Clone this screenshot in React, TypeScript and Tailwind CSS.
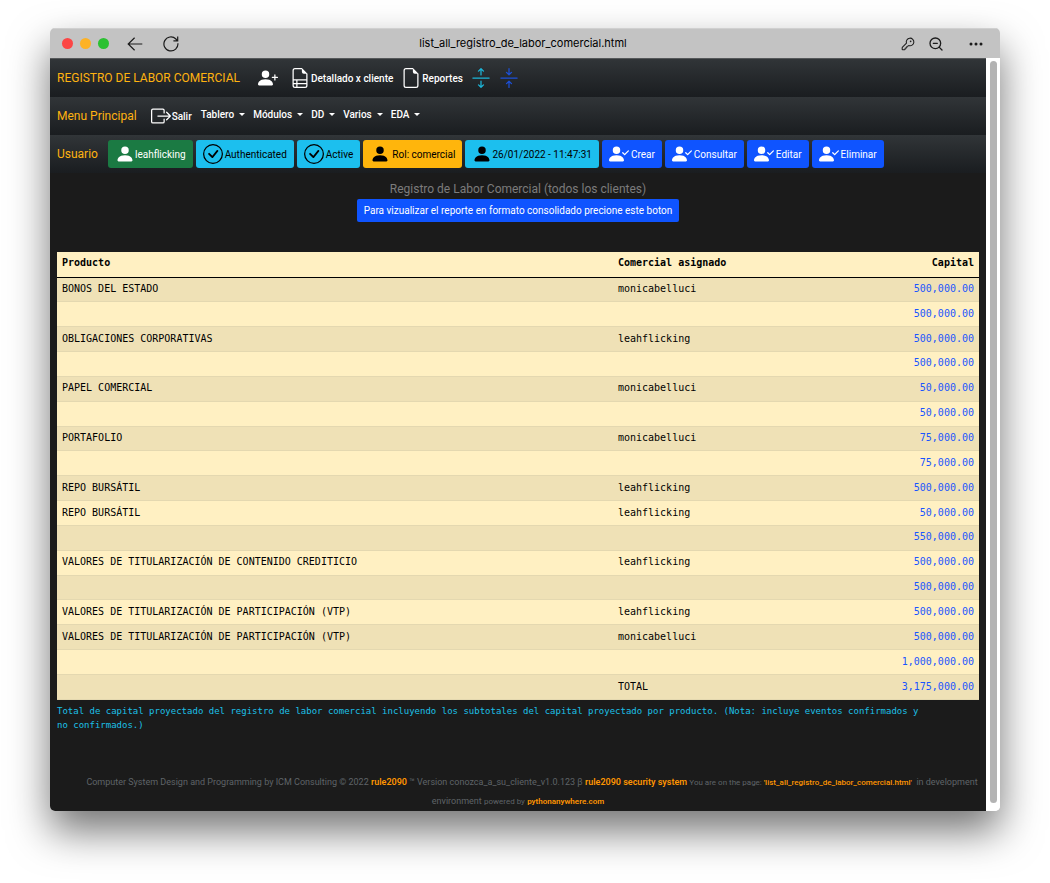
import type { ReactNode } from "react";
import {
  BsArrowsCollapse,
  BsArrowsExpand,
  BsBoxArrowRight,
  BsCheckCircle,
  BsFileEarmark,
  BsFileEarmarkRuled,
  BsPersonCheckFill,
  BsPersonFill,
  BsPersonPlusFill,
  BsThreeDots,
} from "react-icons/bs";
import { KeyRound, ZoomOut } from "lucide-react";

const rows: [string, string, string][] = [
  ["BONOS DEL ESTADO", "monicabelluci", "500,000.00"],
  ["", "", "500,000.00"],
  ["OBLIGACIONES CORPORATIVAS", "leahflicking", "500,000.00"],
  ["", "", "500,000.00"],
  ["PAPEL COMERCIAL", "monicabelluci", "50,000.00"],
  ["", "", "50,000.00"],
  ["PORTAFOLIO", "monicabelluci", "75,000.00"],
  ["", "", "75,000.00"],
  ["REPO BURSÁTIL", "leahflicking", "500,000.00"],
  ["REPO BURSÁTIL", "leahflicking", "50,000.00"],
  ["", "", "550,000.00"],
  ["VALORES DE TITULARIZACIÓN DE CONTENIDO CREDITICIO", "leahflicking", "500,000.00"],
  ["", "", "500,000.00"],
  ["VALORES DE TITULARIZACIÓN DE PARTICIPACIÓN (VTP)", "leahflicking", "500,000.00"],
  ["VALORES DE TITULARIZACIÓN DE PARTICIPACIÓN (VTP)", "monicabelluci", "500,000.00"],
  ["", "", "1,000,000.00"],
  ["", "TOTAL", "3,175,000.00"],
];

const menus = ["Tablero", "Módulos", "DD", "Varios", "EDA"];
const actions = ["Crear", "Consultar", "Editar", "Eliminar"];

function Bar({ label, children }: { label: string; children: ReactNode }) {
  return (
    <nav
      aria-label={label}
      className="flex h-[38px] items-center bg-linear-to-b from-[#313538] to-[#1a1d20] pl-[7px] text-[10px] text-white"
    >
      {children}
    </nav>
  );
}

function Brand({ children }: { children: ReactNode }) {
  return (
    <a href="#" className="text-[12px] whitespace-nowrap text-[#ffb310]">
      {children}
    </a>
  );
}

function Pill({ tone, children }: { tone: string; children: ReactNode }) {
  return (
    <button type="button" className={`flex h-7 items-center rounded-[3px] px-[7px] whitespace-nowrap ${tone}`}>
      {children}
    </button>
  );
}

function TitleBar() {
  return (
    <header className="flex h-[30px] items-center border-t border-[#d0d0d0] bg-[#c3c3c3] pr-4 pl-3 text-[#1c1c1c]">
      <div className="flex flex-1 items-center">
        <div className="flex gap-[7px]">
          <span className="size-[11px] rounded-full bg-[#fc4645]" />
          <span className="size-[11px] rounded-full bg-[#fdb225]" />
          <span className="size-[11px] rounded-full bg-[#2bc132]" />
        </div>
        <button type="button" aria-label="Atrás" className="ml-[18px]">
          <svg width="16" height="16" viewBox="0 0 16 16" fill="none" stroke="currentColor" strokeWidth="1.2">
            <path d="M15.3 8H1.2M7.6 1.8 1.2 8l6.4 6.2" />
          </svg>
        </button>
        <button type="button" aria-label="Recargar" className="ml-5">
          <svg width="16" height="16" viewBox="0 0 16 16" fill="none" stroke="currentColor" strokeWidth="1.2">
            <path d="M14.9 7.2A7 7 0 1 1 12.9 3l1.7 1.8M14.7.6v4.3h-4.3" />
          </svg>
        </button>
      </div>
      <h1 className="text-[11px] text-black">list_all_registro_de_labor_comercial.html</h1>
      <div className="flex flex-1 items-center justify-end">
        <button type="button" aria-label="Contraseñas">
          <KeyRound size={14} strokeWidth={1.8} />
        </button>
        <button type="button" aria-label="Alejar" className="ml-[13px]">
          <ZoomOut size={16} strokeWidth={2} />
        </button>
        <button type="button" aria-label="Más" className="ml-6">
          <BsThreeDots size={16} />
        </button>
      </div>
    </header>
  );
}

export default function App() {
  return (
    <div className="min-h-screen bg-white px-[50px] pt-7 pb-[72px] font-[Inter,sans-serif]">
      <div className="overflow-hidden rounded-[5px] shadow-[0_20px_40px_rgba(0,0,0,0.55)]">
        <TitleBar />
        <div className="flex font-[Roboto,sans-serif]">
          <div className="min-w-0 flex-1 bg-[#1b1b1b]">
            <div className="border-t border-[#55585a]">
              <Bar label="Registro">
                <Brand>REGISTRO DE LABOR COMERCIAL</Brand>
                <a href="#" aria-label="Agregar cliente" className="ml-[18px]">
                  <BsPersonPlusFill size={20} />
                </a>
                <a href="#" className="ml-3 flex items-center gap-px font-medium whitespace-nowrap">
                  <BsFileEarmarkRuled size={20} />
                  Detallado x cliente
                </a>
                <a href="#" className="ml-2 flex items-center gap-px font-medium">
                  <BsFileEarmark size={20} />
                  Reportes
                </a>
                <a href="#" aria-label="Expandir" className="ml-2 text-[#1cb5d8]">
                  <BsArrowsExpand size={20} />
                </a>
                <a href="#" aria-label="Contraer" className="ml-2 text-[#1c50d8]">
                  <BsArrowsCollapse size={20} />
                </a>
              </Bar>
            </div>
            <Bar label="Menu Principal">
              <Brand>Menu Principal</Brand>
              <a href="#" className="ml-[14px] flex items-center gap-px font-medium">
                <BsBoxArrowRight size={20} />
                Salir
              </a>
              <div className="mb-1 ml-[9px] flex gap-2">
                {menus.map((m) => (
                  <button key={m} type="button" className="flex items-center gap-[5px] font-medium">
                    {m}
                    <span className="border-x-[3px] border-t-[3px] border-x-transparent border-t-white" />
                  </button>
                ))}
              </div>
            </Bar>
            <Bar label="Usuario">
              <Brand>Usuario</Brand>
              <div className="ml-[10px] flex gap-[3px]">
                <Pill tone="bg-[#1b7a43] text-white">
                  <BsPersonFill size={20} />
                  leahflicking
                </Pill>
                <Pill tone="bg-[#1cbfee] text-black">
                  <BsCheckCircle size={20} className="mr-[2px]" />
                  Authenticated
                </Pill>
                <Pill tone="bg-[#1cbfee] text-black">
                  <BsCheckCircle size={20} className="mr-[2px]" />
                  Active
                </Pill>
                <Pill tone="bg-[#ffb50c] text-black">
                  <BsPersonFill size={20} className="mr-[2px]" />
                  Rol: comercial
                </Pill>
                <Pill tone="bg-[#1cbfee] text-black">
                  <BsPersonFill size={20} />
                  26/01/2022 - 11:47:31
                </Pill>
                {actions.map((a) => (
                  <Pill key={a} tone="bg-[#0f54ff] text-white">
                    <BsPersonCheckFill size={20} className="mr-[2px]" />
                    {a}
                  </Pill>
                ))}
              </div>
            </Bar>

            <main className="px-[7px] pt-2">
              <div className="flex flex-col items-center">
                <h2 className="text-[12px] leading-[16px] text-[#7c7c7c]">
                  Registro de Labor Comercial (todos los clientes)
                </h2>
                <button
                  type="button"
                  className="mt-[2px] h-[23px] rounded-[2px] bg-[#0f54ff] px-[7px] text-[10px] text-white"
                >
                  Para vizualizar el reporte en formato consolidado precione este boton
                </button>
              </div>

              <table className="mt-[30px] h-[448px] w-full table-fixed border-collapse bg-[#fff0c2] font-['DejaVu_Sans_Mono',monospace] text-[10px] leading-[14px] text-black">
                <colgroup>
                  <col className="w-[60.3%]" />
                  <col />
                  <col />
                </colgroup>
                <thead>
                  <tr className="h-[25px] border-b border-black text-left">
                    <th className="px-[5px] pb-[2px]">Producto</th>
                    <th className="px-[5px] pb-[2px]">Comercial asignado</th>
                    <th className="px-[5px] pb-[2px] text-right">Capital</th>
                  </tr>
                </thead>
                <tbody>
                  {rows.map(([product, seller, capital], i) => (
                    <tr key={i} className="h-[24px] border-b border-[#e4d8b0] odd:bg-[#efe1b6]">
                      <td className="px-[5px] pb-px">{product}</td>
                      <td className="px-[5px] pb-px">{seller}</td>
                      <td className="px-[5px] pb-px text-right text-[#1a55ff]">{capital}</td>
                    </tr>
                  ))}
                </tbody>
              </table>
              <p className="mt-1 font-['DejaVu_Sans_Mono',monospace] text-[9px] leading-[14px] text-[#1cc0e8]">
                Total de capital proyectado del registro de labor comercial incluyendo los subtotales del capital
                proyectado por producto. (Nota: incluye eventos confirmados y<br />
                no confirmados.)
              </p>
            </main>

            <footer className="mt-[41px] pl-7 text-center text-[9px] leading-[19px] text-[#5f6468]">
              <p>
                Computer System Design and Programming by ICM Consulting © 2022{" "}
                <b className="font-semibold text-[#ff9500]">rule2090</b> ™ Version conozca_a_su_cliente_v1.0.123 β{" "}
                <b className="font-semibold text-[#ff9500]">rule2090 security system</b>{" "}
                <span className="text-[8px]">
                  You are on the page:{" "}
                  <span className="font-medium text-[#ff9500]">'list_all_registro_de_labor_comercial.html'</span>
                </span>
                &nbsp; in development
              </p>
              <p className="pr-7">
                environment <span className="text-[8px]">powered by</span>{" "}
                <a href="#" className="text-[8px] font-semibold text-[#ff9500]">
                  pythonanywhere.com
                </a>
              </p>
            </footer>
          </div>
          <div className="flex w-[14px] justify-center bg-white pt-[3px] pb-2">
            <div className="w-[7px] rounded-full bg-[#b3b3b3]" />
          </div>
        </div>
      </div>
    </div>
  );
}
